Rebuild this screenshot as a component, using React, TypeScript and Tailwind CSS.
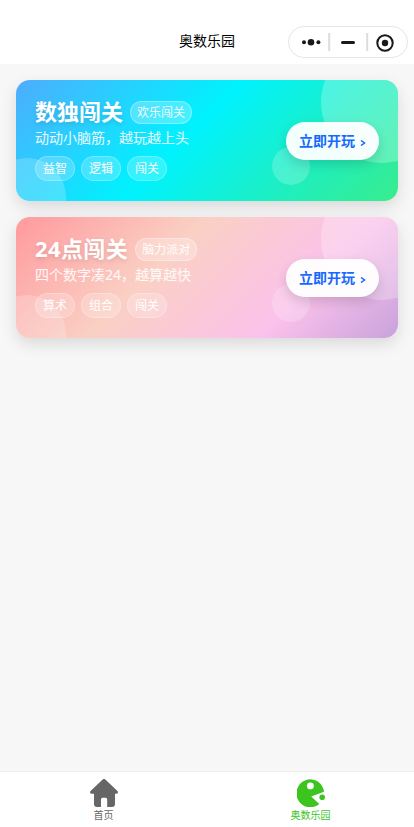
interface Game {
  title: string;
  badge: string;
  desc: string;
  tags: string[];
  bg: string;
  tracking: string;
}

const GAMES: Game[] = [
  {
    title: "数独闯关",
    badge: "欢乐闯关",
    desc: "动动小脑筋，越玩越上头",
    tags: ["益智", "逻辑", "闯关"],
    bg: "bg-[linear-gradient(135deg,#4facfe_0%,#00f2fe_45%,#38ec8c_100%)]",
    tracking: "tracking-normal",
  },
  {
    title: "24点闯关",
    badge: "脑力派对",
    desc: "四个数字凑24，越算越快",
    tags: ["算术", "组合", "闯关"],
    bg: "bg-[linear-gradient(135deg,#ff9a9e_0%,#fad0c4_38%,#fbc2eb_72%,#c8a2dc_100%)]",
    tracking: "tracking-[0.4px]",
  },
];

function Capsule() {
  return (
    <div className="absolute top-[26px] right-1.5 flex h-8 w-30 items-center rounded-full border border-[#e6e6e6] bg-white">
      <svg className="h-full w-full" viewBox="0 0 118 30" fill="#191919">
        <circle cx="15" cy="15.3" r="2" />
        <circle cx="22" cy="15.3" r="3.3" />
        <circle cx="29.4" cy="15.3" r="2" />
        <rect x="39.2" y="6" width="2" height="18" fill="#dcdcdc" />
        <rect x="52" y="14" width="14" height="3" rx="1.5" />
        <rect x="77.2" y="6" width="2" height="18" fill="#dcdcdc" />
        <circle cx="96" cy="16" r="7.7" fill="none" stroke="#191919" strokeWidth="2" />
        <circle cx="96" cy="16" r="3.2" />
      </svg>
    </div>
  );
}

function GameCard({ game }: { game: Game }) {
  return (
    <section
      className={`relative flex h-[121px] items-center justify-between overflow-hidden rounded-[14px] px-[19px] ${game.bg}`}
    >
      <span className="absolute -top-[39px] -right-[45px] size-[122px] rounded-full bg-white/25" />
      <span className="absolute -bottom-[35px] -left-[28px] size-[78px] rounded-full bg-white/20" />
      <span className="absolute top-[67px] right-[88px] size-[38px] rounded-full bg-white/20" />

      <div className="relative">
        <div className="flex h-[23px] items-center gap-[7px]">
          <h2
            className={`-mt-px text-[22px] leading-[26px] font-bold text-white [text-shadow:0_2px_4px_rgba(0,0,0,0.12)] ${game.tracking}`}
          >
            {game.title}
          </h2>
          <span className="mt-0.5 flex h-[23px] shrink-0 items-center rounded-full border border-white/30 bg-white/25 px-1.5 text-xs text-white/95">
            {game.badge}
          </span>
        </div>
        <p className="mt-[5px] text-sm leading-5 text-white/90">{game.desc}</p>
        <div className="mt-2 flex gap-1.5">
          {game.tags.map((tag) => (
            <span
              key={tag}
              className="flex h-[25px] items-center rounded-full border border-white/25 bg-white/20 px-[7px] text-xs text-white"
            >
              {tag}
            </span>
          ))}
        </div>
      </div>

      <button className="relative flex h-[38px] w-[93px] items-center justify-center gap-[5px] rounded-full bg-white/95 text-sm font-bold text-[#1769ff] shadow-[0_5px_12px_rgba(0,0,0,0.14)]">
        立即开玩
        <svg className="mt-1" width="6" height="6" viewBox="0 0 6 6" fill="none" stroke="currentColor" strokeWidth="1.5">
          <path d="M1 .5 4.5 3 1 5.5" />
        </svg>
      </button>
    </section>
  );
}

function HomeIcon() {
  return (
    <svg width="28" height="28" viewBox="0 0 28 28" fill="#666">
      <path d="M12.4.7a2.3 2.3 0 0 1 3.2 0L27.4 12c1.1 1.1.5 2.7-.9 2.7H25V25a3 3 0 0 1-3 3h-4.8v-7.6a1.6 1.6 0 0 0-1.6-1.6h-3a1.6 1.6 0 0 0-1.6 1.6V28H7a3 3 0 0 1-3-3V14.7H1.5C.1 14.7-.5 13.1.6 12Z" />
    </svg>
  );
}

function GameIcon() {
  return (
    <svg width="28" height="28" viewBox="0 0 28 28" fill="#3cc51f">
      <path
        fillRule="evenodd"
        d="M27 12.8 14.2 17.4 22.3 24.9A13.8 14 0 1 1 27 12.8ZM13.4 3.5a3.4 3.4 0 1 0 0 6.8 3.4 3.4 0 0 0 0-6.8Z"
      />
      <circle cx="25.2" cy="18.2" r="2.8" />
    </svg>
  );
}

export default function App() {
  return (
    <div className="flex h-screen flex-col bg-[#f7f7f7] font-['Noto_Sans','Noto_Sans_CJK_SC',sans-serif]">
      <header className="relative flex h-16 shrink-0 items-end justify-center bg-white pb-[13px] text-sm text-black">
        奥数乐园
        <Capsule />
      </header>

      <main className="flex flex-1 flex-col gap-4 p-4">
        {GAMES.map((game) => (
          <div key={game.title} className="rounded-[14px] shadow-[0_6px_16px_rgba(0,0,0,0.12)]">
            <GameCard game={game} />
          </div>
        ))}
      </main>

      <nav className="flex h-14 shrink-0 border-t border-[#f0f0f0] bg-white text-[10px] leading-3">
        <div className="flex flex-1 flex-col items-center gap-0.5 pt-[7px] text-[#666]">
          <HomeIcon />
          首页
        </div>
        <div className="flex flex-1 flex-col items-center gap-0.5 pt-[7px] text-[#3cc51f]">
          <GameIcon />
          奥数乐园
        </div>
      </nav>
    </div>
  );
}
